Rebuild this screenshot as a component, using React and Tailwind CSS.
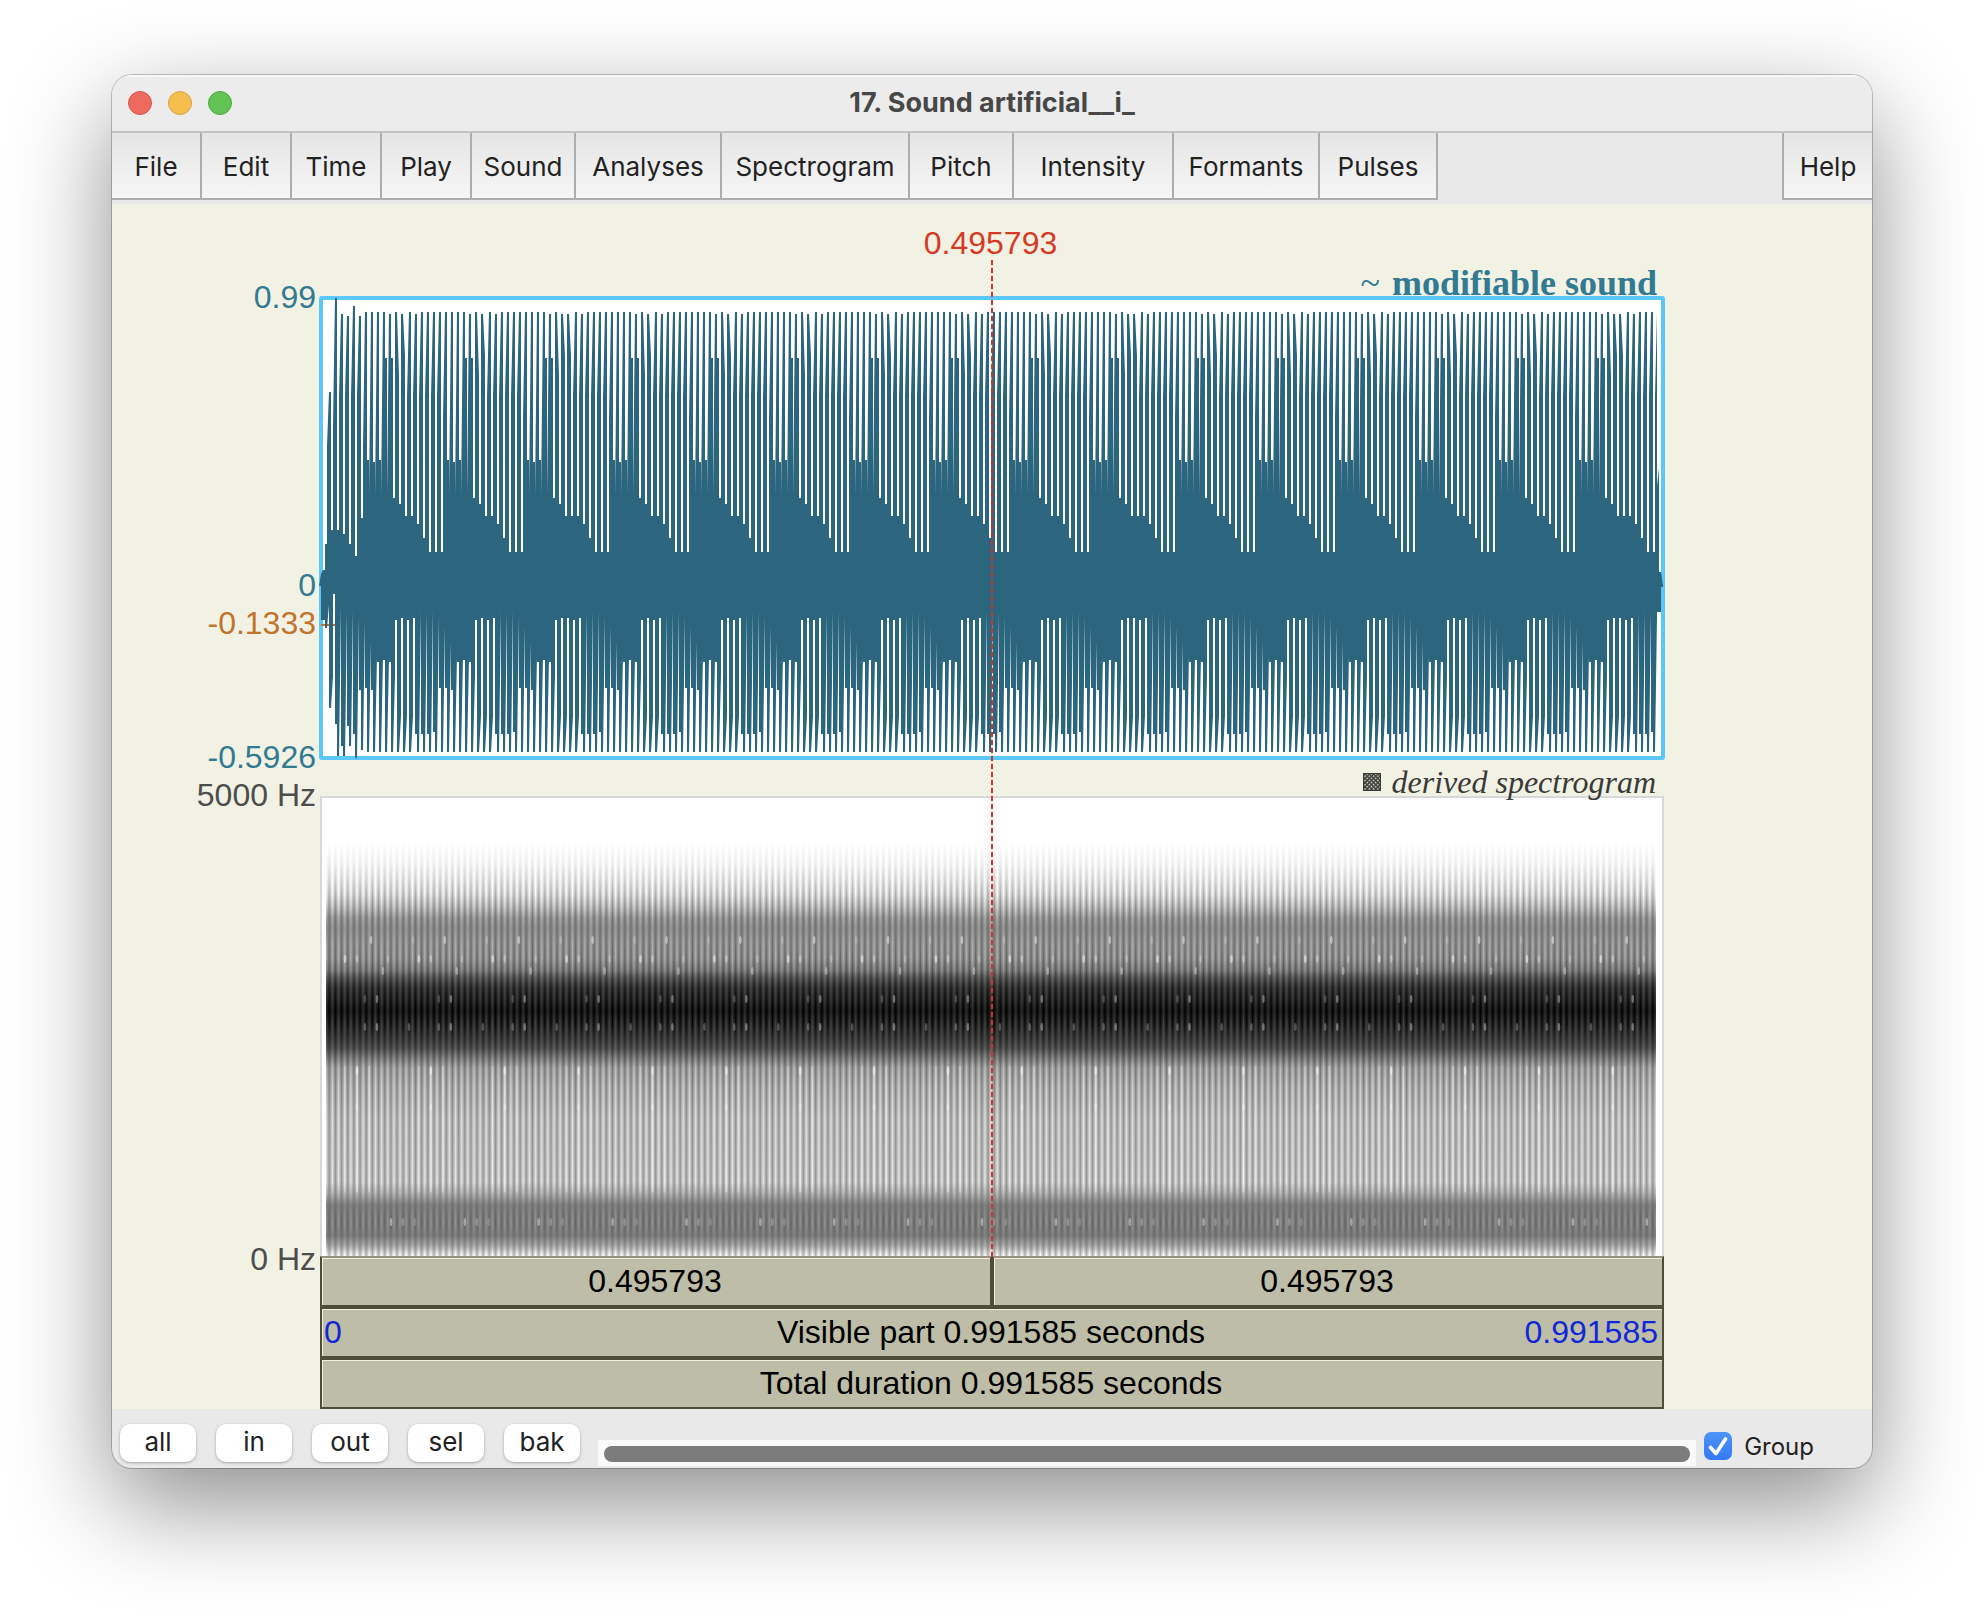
import { useState } from 'react'

const MENUS = [
  { label: 'File', width: 'w-[90px]' },
  { label: 'Edit', width: 'w-[90px]' },
  { label: 'Time', width: 'w-[90px]' },
  { label: 'Play', width: 'w-[90px]' },
  { label: 'Sound', width: 'w-[104px]' },
  { label: 'Analyses', width: 'w-[146px]' },
  { label: 'Spectrogram', width: 'w-[188px]' },
  { label: 'Pitch', width: 'w-[104px]' },
  { label: 'Intensity', width: 'w-[160px]' },
  { label: 'Formants', width: 'w-[146px]' },
  { label: 'Pulses', width: 'w-[118px]' },
]

const ZOOM_BUTTONS = ['all', 'in', 'out', 'sel', 'bak']

// Waveform columns are 2px wide: [topLeft, topRight, bottomLeft, bottomRight]
const HEAD = [
  [290, 278, 290, 290], [278, 274, 324, 324],
  [274, 274, 324, 324], [248, 248, 332, 332], [150, 96, 332, 309], [96, 96, 412, 412],
  [234, 234, 412, 380], [130, 2, 298, 298], [2, 2, 428, 428], [234, 234, 460, 460],
  [100, 18, 460, 310], [18, 18, 450, 450], [238, 238, 460, 460], [100, 20, 460, 315],
  [20, 20, 430, 430], [248, 248, 450, 450], [100, 10, 450, 315], [10, 10, 438, 438],
  [260, 260, 462, 462], [100, 20, 462, 320], [20, 20, 394, 394], [222, 222, 454, 454],
  [150, 14, 454, 325],
]

// One entry per pulse, ordered by where the pulse falls inside its column
const PULSES = [
  [[16, 16, 456, 456], [220, 220, 456, 420], [100, 16, 322, 322]],
  [[18, 18, 438, 438], [228, 228, 456, 456], [100, 16, 456, 315]],
  [[16, 16, 438, 438], [242, 242, 456, 456], [100, 16, 456, 315]],
  [[16, 16, 438, 438], [256, 256, 456, 456], [100, 16, 456, 315]],
  [[16, 16, 436, 436], [256, 256, 456, 456], [100, 16, 456, 320]],
  [[16, 16, 392, 392], [256, 256, 456, 456], [120, 16, 456, 330]],
  [[16, 16, 392, 392], [164, 164, 456, 456], [200, 16, 456, 345]],
  [[16, 16, 394, 394], [166, 166, 456, 456], [200, 16, 456, 360]],
  [[16, 16, 366, 366], [164, 164, 456, 456], [200, 16, 456, 362]],
  [[16, 16, 364, 364], [62, 62, 456, 456], [200, 16, 456, 362]],
  [[18, 18, 366, 366], [62, 62, 456, 456], [202, 202, 456, 380]],
  [[16, 16, 324, 324], [16, 80, 456, 456], [208, 208, 456, 420]],
  [[18, 18, 322, 322], [18, 60, 456, 456], [220, 220, 456, 420]],
]
const FILLER = [100, 16, 324, 324]

const TAIL = [[190, 172, 316, 316], [276, 276, 316, 316], [276, 290, 290, 290]]

const COLUMNS_PER_PULSE = 3.076
const PULSES_PER_CYCLE = 13.15

function buildWave() {
  const columns = [...HEAD]
  let pos = 23.49
  while (columns.length < 669) {
    const start = Math.floor(pos)
    const index = Math.min(12, Math.floor((pos - start) * PULSES_PER_CYCLE))
    pos += COLUMNS_PER_PULSE
    columns.push(...PULSES[index])
    if (Math.floor(pos) - start === 4) columns.push(FILLER)
  }
  columns.length = 669
  columns.push(...TAIL)
  return columns
    .map(([tl, tr, bl, br], i) => `M${i * 2} ${tl}L${i * 2 + 2} ${tr}V${br}L${i * 2} ${bl}Z`)
    .join('')
}

const WAVE_PATH = buildWave()

// [y, grey at the stripe, grey between stripes]
const PROFILE = [
  [44, 255, 255], [65, 236, 255], [80, 210, 255], [96, 176, 250], [108, 146, 220], [120, 116, 174],
  [130, 112, 156], [145, 112, 172], [160, 104, 176], [172, 86, 148], [180, 54, 104], [190, 26, 72],
  [200, 12, 62], [213, 0, 42], [226, 8, 66], [240, 36, 76], [250, 54, 94], [259, 86, 138],
  [270, 120, 188], [290, 132, 208], [320, 146, 222], [360, 150, 224], [384, 150, 230], [395, 138, 192],
  [407, 112, 132], [424, 98, 148], [438, 110, 130], [448, 140, 180], [456, 174, 250], [458, 184, 255],
]

const DOTS = [
  [45, 142, 0.45], [87, 142, 0.2], [19, 161, 0.5], [31, 161, 0.3], [62, 161, 0.2], [57, 173, 0.35],
  [51, 201, 0.35], [39, 201, 0.2], [51, 229, 0.35], [39, 229, 0.25], [83, 229, 0.25], [31, 273, 0.45],
  [31, 309, 0.3], [65, 424, 0.4], [77, 424, 0.25], [89, 424, 0.2],
]
const BRIGHT_STRIPES = [[31, 0.35], [43, 0.25], [19, 0.2]]

function Waveform() {
  return (
    <svg viewBox="0 0 1346 464" preserveAspectRatio="none" className="-m-1 block h-[464px] w-[calc(100%+8px)] max-w-none" role="img" aria-label="Waveform">
      <rect x="2" y="289" width="1342" height="2" fill="#2b657e" />
      <rect x="2" y="328" width="16" height="2" fill="#c1732c" />
      <path d={WAVE_PATH} fill="#2b657e" />
    </svg>
  )
}

function Spectrogram() {
  const cycles = Array.from({ length: 19 }, (_, i) => i * 73.87)
  return (
    <svg viewBox="0 0 1330 458" preserveAspectRatio="none" className="block h-[458px] w-full" role="img" aria-label="Spectrogram">
      <defs>
        <linearGradient id="stripe" gradientUnits="userSpaceOnUse" x1="0" y1="0" x2="0" y2="458">
          {PROFILE.map(([y, g]) => <stop key={y} offset={y / 458} stopColor={`rgb(${g},${g},${g})`} />)}
        </linearGradient>
        <linearGradient id="between" gradientUnits="userSpaceOnUse" x1="0" y1="0" x2="0" y2="458">
          {PROFILE.map(([y, , g]) => <stop key={y} offset={y / 458} stopColor={`rgb(${g},${g},${g})`} />)}
        </linearGradient>
        <linearGradient id="ripple" gradientUnits="userSpaceOnUse" spreadMethod="reflect" x1="31" y1="0" x2="34.078" y2="0">
          <stop offset="0" stopColor="#fff" />
          <stop offset="1" stopColor="#000" />
        </linearGradient>
        <mask id="ripples" maskUnits="userSpaceOnUse" x="0" y="0" width="1330" height="458">
          <rect width="1330" height="458" fill="url(#ripple)" />
        </mask>
      </defs>
      <rect width="1330" height="458" fill="url(#stripe)" />
      <rect width="1330" height="458" fill="url(#between)" mask="url(#ripples)" />
      {cycles.map((x) => (
        <g key={x} fill="#fff">
          {BRIGHT_STRIPES.map(([dx, o]) => <rect key={dx} x={x + dx - 1} y="268" width="2" height="126" opacity={o} />)}
          {DOTS.map(([dx, y, o]) => <ellipse key={`${dx}-${y}`} cx={x + dx} cy={y} rx="1.3" ry="4" opacity={o} />)}
        </g>
      ))}
    </svg>
  )
}

function HatchIcon() {
  return (
    <svg width="18" height="18" viewBox="0 0 18 18" aria-hidden="true">
      <defs>
        <pattern id="hatch" width="3" height="3" patternUnits="userSpaceOnUse" patternTransform="rotate(45)">
          <rect width="3" height="3" fill="#3a3a38" />
          <rect width="1.5" height="1.5" fill="#e4e4da" />
        </pattern>
      </defs>
      <rect x="0.5" y="0.5" width="17" height="17" fill="url(#hatch)" stroke="#3a3a38" />
    </svg>
  )
}

function AxisLabels() {
  return (
    <div className="flex flex-col items-end pt-[77px] pr-[3px] text-[32px] leading-8 text-[#317a92]">
      <span>0.99</span>
      <span className="mt-64">0</span>
      <span className="mt-[6px] text-[#c1732c]">-0.1333</span>
      <span className="mt-[102px]">-0.5926</span>
      <span className="mt-[6px] text-[#4d4d4d]">5000 Hz</span>
      <span className="mt-[432px] text-[#4d4d4d]">0 Hz</span>
    </div>
  )
}

function TimeBar({ children, className = '' }) {
  return (
    <button type="button" className={`h-[51px] border-2 border-[#4e4d38] bg-[#bebea8] pr-1 pb-[2px] pl-[2px] text-[32px] leading-8 text-black shadow-[inset_1px_1px_0_#efefdc] ${className}`}>
      {children}
    </button>
  )
}

export default function App() {
  const [group, setGroup] = useState(true)

  return (
    <div className="min-h-[1616px] bg-white px-28 pt-[75px] font-['Inter',sans-serif]">
      <main className="overflow-hidden rounded-[20px] bg-[#e9e9e9] shadow-[0_0_0_1px_rgba(0,0,0,0.22),0_36px_100px_rgba(0,0,0,0.45)]">
        <header className="grid h-[58px] grid-cols-[1fr_auto_1fr] items-center border-b-2 border-[#c3c3c3] bg-[#ececec] shadow-[inset_0_2px_0_#f8f8f8]">
          <div className="flex gap-4 pl-4">
            <button type="button" aria-label="Close" className="size-6 rounded-full border border-[#d65549] bg-[#ec6a5e]" />
            <button type="button" aria-label="Minimize" className="size-6 rounded-full border border-[#d9a23c] bg-[#f5bf4f]" />
            <button type="button" aria-label="Zoom" className="size-6 rounded-full border border-[#52a842] bg-[#61c454]" />
          </div>
          <h1 className="text-[27px] leading-8 font-bold text-[#474747]">17. Sound artificial__i_</h1>
        </header>

        <nav className="flex h-[71px] items-start text-[26px] leading-8 text-[#222]">
          {MENUS.map((menu) => (
            <button key={menu.label} type="button" className={`h-[67px] border-r-2 border-b-2 border-[#adadad] bg-gradient-to-b from-[#e5e5e5] to-[#f6f6f6] pt-[2px] ${menu.width}`}>{menu.label}</button>
          ))}
          <button type="button" className="ml-auto h-[67px] w-[90px] border-b-2 border-l-2 border-[#adadad] bg-gradient-to-b from-[#e5e5e5] to-[#f6f6f6] pt-[2px]">Help</button>
        </nav>

        <section className="grid grid-cols-[207px_minmax(0,1fr)_207px] bg-[#f1f1e4] font-['Liberation_Sans',sans-serif]">
          <AxisLabels />
          <div className="relative">
            <p className="pt-[23px] pr-[3px] text-center text-[32px] leading-8 text-[#d63a24]">0.495793</p>
            <h2 className="flex h-[37px] items-center justify-end gap-3 pt-[10px] pr-2 font-['Liberation_Serif',serif] text-4xl font-bold text-[#317a92]">
              <span className="font-normal">~</span>modifiable sound
            </h2>
            <div className="h-[464px] rounded-[3px] border-4 border-[#5bc8fa] bg-white">
              <Waveform />
            </div>
            <div className="px-px">
              <h2 className="relative z-10 flex h-9 items-center justify-end gap-[10px] pt-2 pr-2 font-['Liberation_Serif',serif] text-[32px] leading-8 text-[#3a3a38] italic">
                <HatchIcon />derived spectrogram
              </h2>
              <div className="border-2 border-b-0 border-[#d8d8d8] bg-white pr-[6px] pl-1">
                <Spectrogram />
              </div>
              <div className="flex flex-col">
                <div className="grid grid-cols-2">
                  <TimeBar className="border-t-[#93937f]">0.495793</TimeBar>
                  <TimeBar className="border-t-[#93937f]">0.495793</TimeBar>
                </div>
                <TimeBar className="grid grid-cols-[1fr_auto_1fr] items-center">
                  <span className="text-left text-[#1127d8]">0</span>
                  <span>Visible part 0.991585 seconds</span>
                  <span className="text-right text-[#1127d8]">0.991585</span>
                </TimeBar>
                <TimeBar>Total duration 0.991585 seconds</TimeBar>
              </div>
            </div>
            <svg className="pointer-events-none absolute top-14 left-1/2 h-[997px] w-[2px] -translate-x-1/2" aria-hidden="true">
              <line x1="1" y1="0" x2="1" y2="100%" stroke="#cf3527" strokeWidth="2" strokeDasharray="5 3" />
            </svg>
          </div>
        </section>

        <footer className="flex h-[59px] items-start pr-[58px] pl-2 text-[26px] leading-8 text-[#222]">
          <div className="flex gap-5 pt-[15px]">
            {ZOOM_BUTTONS.map((label) => (
              <button key={label} type="button" className="h-[38px] w-[76px] rounded-[10px] bg-white pb-[2px] shadow-[0_1px_3px_rgba(0,0,0,0.3)]">{label}</button>
            ))}
          </div>
          <div role="scrollbar" aria-label="Visible part" aria-orientation="horizontal" aria-controls="root" aria-valuenow={0} className="mt-[31px] ml-[18px] flex-1 bg-[#fafafa] px-[6px] pt-[6px] pb-1">
            <div className="h-4 rounded-full bg-[#7c7c7c]" />
          </div>
          <label className="mt-5 ml-2 flex items-center gap-3 text-2xl leading-8">
            <span className="relative size-7">
              <input type="checkbox" checked={group} onChange={(e) => setGroup(e.target.checked)} className="block size-7 appearance-none rounded-[7px] border border-[#c4c4c4] bg-white checked:border-0 checked:bg-gradient-to-b checked:from-[#4d94f8] checked:to-[#3478f6]" />
              {group && (
                <svg viewBox="0 0 28 28" className="pointer-events-none absolute inset-0 size-7" fill="none" stroke="#fff" strokeWidth="3.6" strokeLinecap="round" strokeLinejoin="round" aria-hidden="true">
                  <path d="M6.5 15.5L12 21.5L21.5 7" />
                </svg>
              )}
            </span>
            <span className="pt-[2px]">Group</span>
          </label>
        </footer>
      </main>
    </div>
  )
}
